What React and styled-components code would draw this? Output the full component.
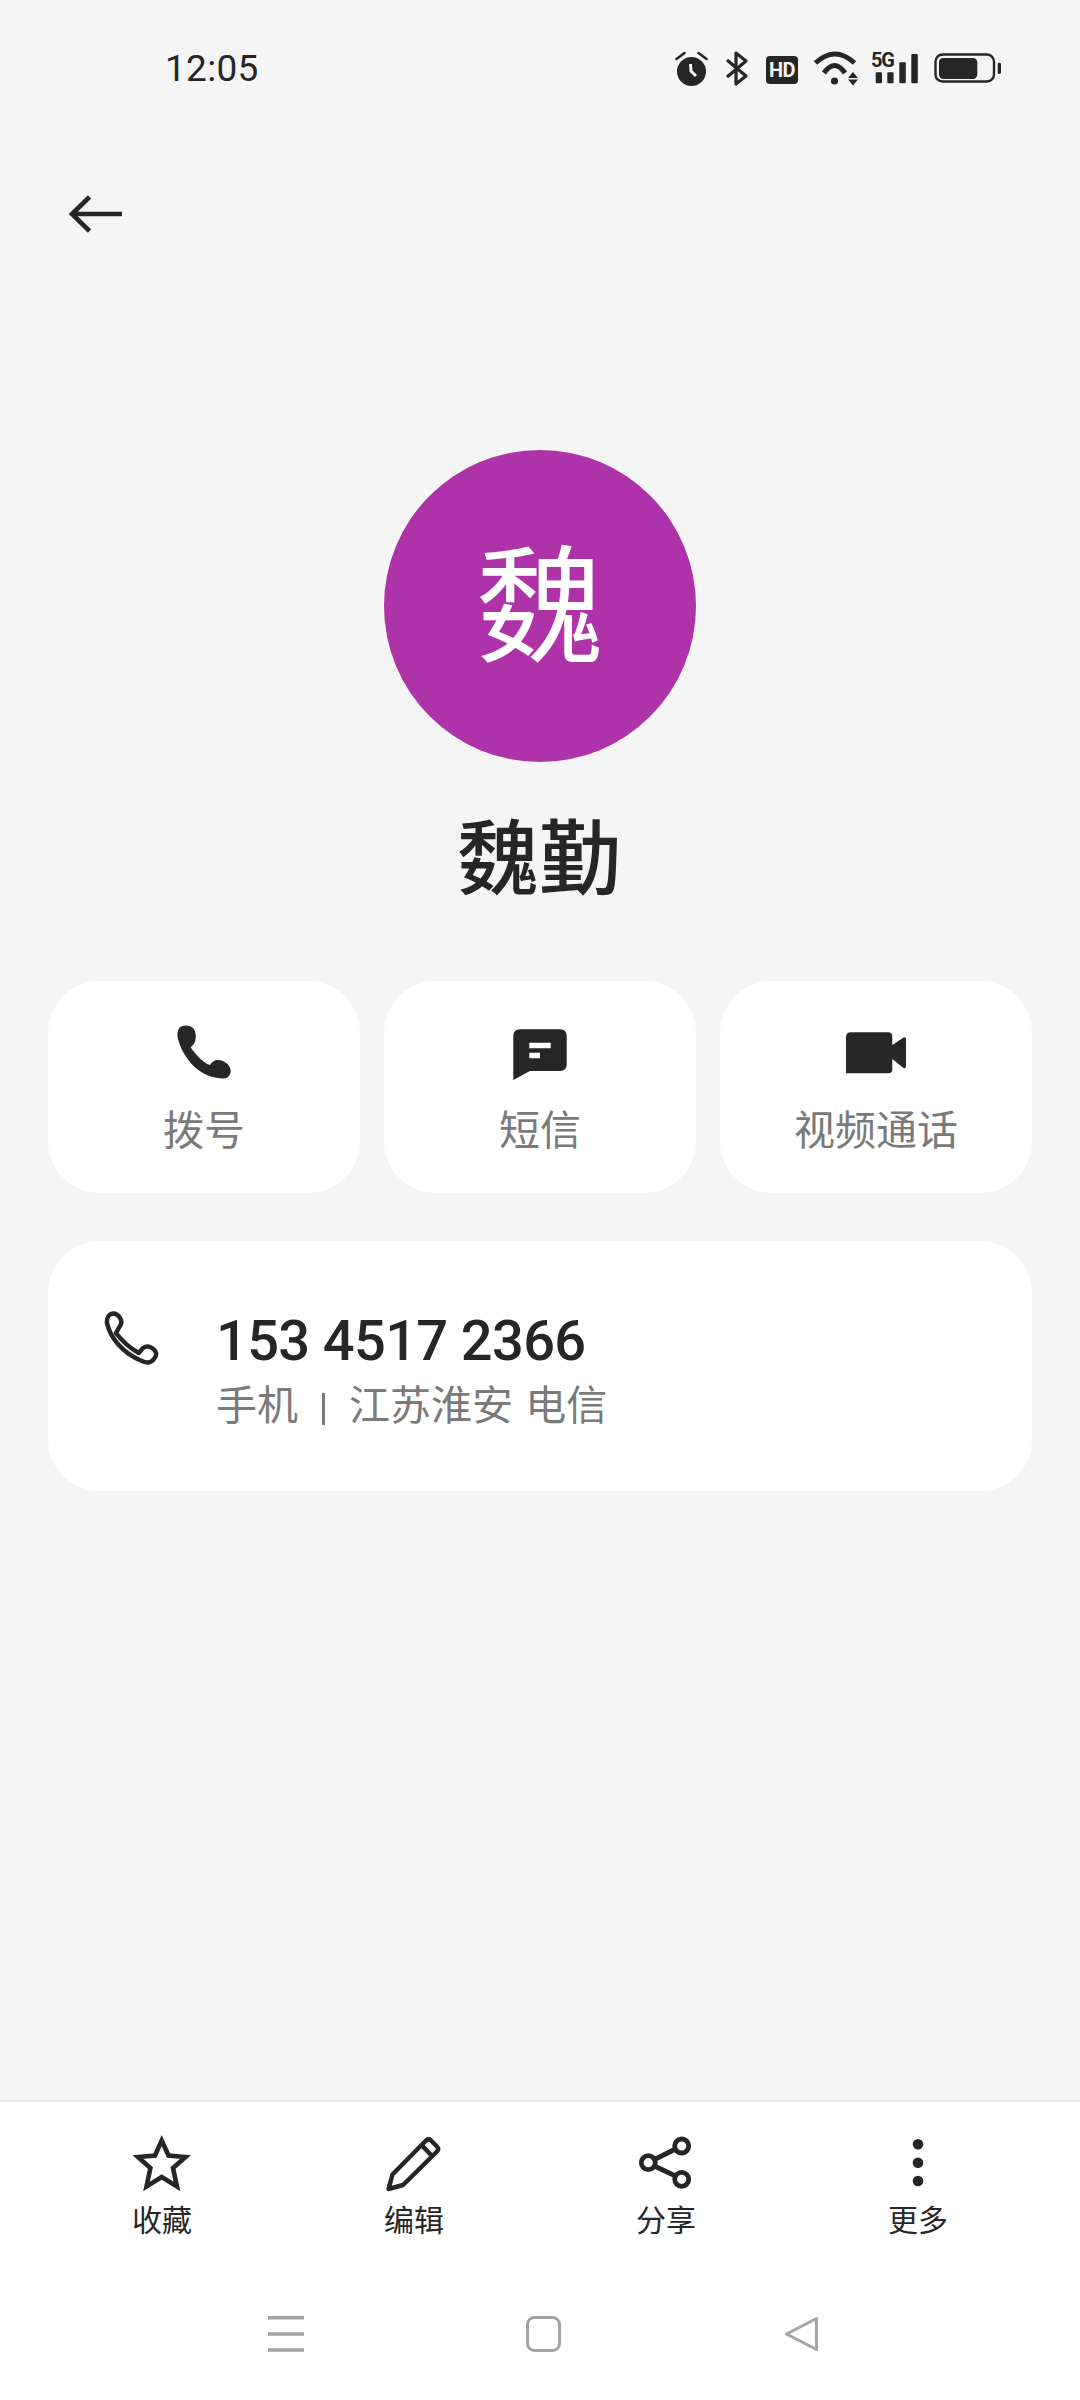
import React from "react";
import styled, { createGlobalStyle } from "styled-components";

const CJK = `Roboto, "Noto Sans CJK SC", sans-serif`;
const INK = "#262626";
const MUTED = "#7a7a7a";
const NAV = "#a3a3a3";

const Global = createGlobalStyle`
  html, body { margin: 0; padding: 0; background: #f5f5f5; }
  * { box-sizing: border-box; }
`;

const Page = styled.div`
  width: 1080px;
  height: 2400px;
  display: flex;
  flex-direction: column;
  background: #f5f5f5;
  font-family: ${CJK};
  color: ${INK};
  overflow: hidden;
`;

const StatusBar = styled.div`
  height: 136px;
  padding: 0 70px 0 165px;
  display: flex;
  align-items: center;
  justify-content: space-between;
`;

const Time = styled.div`
  font-size: 37px;
  line-height: 40px;
  letter-spacing: 0.3px;
  padding-top: 2px;
`;

const StatusIcons = styled.svg`
  display: block;
  width: 340px;
  height: 44px;
`;

const BackRow = styled.div`
  height: 156px;
  padding-left: 66px;
  display: flex;
  align-items: center;
`;

const BackIcon = styled.svg`
  display: block;
  width: 58px;
  height: 44px;
`;

const Hero = styled.div`
  padding-top: 158px;
  display: flex;
  flex-direction: column;
  align-items: center;
`;

const Avatar = styled.div`
  width: 312px;
  height: 312px;
  padding-top: 6px;
  border-radius: 50%;
  background: #ae33a8;
  color: #fff;
  display: flex;
  align-items: center;
  justify-content: center;
  font-size: 128px;
  font-weight: 400;
  line-height: 1;
`;

const Name = styled.div`
  margin-top: 44px;
  margin-right: 2px;
  font-size: 82px;
  line-height: 108px;
  font-weight: 500;
`;

const Actions = styled.div`
  margin: 67px 48px 0;
  display: grid;
  grid-template-columns: repeat(3, 1fr);
  gap: 24px;
`;

const ActionCard = styled.div`
  height: 212px;
  background: #fff;
  border-radius: 52px;
  display: flex;
  flex-direction: column;
  align-items: center;
  padding-top: 40px;
`;

const ActionIcon = styled.svg`
  display: block;
  width: 72px;
  height: 72px;
`;

const ActionLabel = styled.div`
  margin-top: 10px;
  font-size: 41px;
  line-height: 56px;
  color: ${MUTED};
`;

const NumberCard = styled.div`
  margin: 48px 48px 0;
  height: 250px;
  background: #fff;
  border-radius: 52px;
  display: flex;
  padding: 62px 0 0 52px;
`;

const NumberIcon = styled.svg`
  display: block;
  width: 60px;
  height: 60px;
  margin-top: 4px;
  flex: none;
`;

const NumberText = styled.div`
  margin-left: 56px;
  display: flex;
  flex-direction: column;
`;

const PhoneNumber = styled.div`
  font-size: 56px;
  line-height: 76px;
  font-weight: 500;
  letter-spacing: -0.65px;
`;

const NumberMeta = styled.div`
  font-size: 41px;
  line-height: 54px;
  word-spacing: 2px;
  color: ${MUTED};
`;

const MetaDivider = styled.span`
  display: inline-block;
  width: 3px;
  height: 32px;
  margin: 0 24px;
  vertical-align: -5px;
  background: ${MUTED};
`;

const Spacer = styled.div`
  flex: 1;
`;

const BottomArea = styled.div`
  height: 300px;
  background: #fff;
  border-top: 2px solid #e6e6e6;
  display: flex;
  flex-direction: column;
`;

const Toolbar = styled.div`
  padding: 0 36px;
  display: grid;
  grid-template-columns: repeat(4, 252px);
`;

const Tool = styled.div`
  display: flex;
  flex-direction: column;
  align-items: center;
  padding-top: 30px;
`;

const ToolIcon = styled.svg`
  display: block;
  width: 64px;
  height: 64px;
`;

const ToolLabel = styled.div`
  margin-top: 5px;
  font-size: 30px;
  line-height: 40px;
  color: ${INK};
`;

const NavBar = styled.div`
  margin-top: 71px;
  padding-left: 264px;
  display: flex;
  align-items: center;
`;

const NavIcon = styled.svg`
  display: block;
  width: 44px;
  height: 44px;
  margin-right: ${(p) => p.$gap || 0}px;
`;

const tools = [
  {
    label: "收藏",
    icon: (
      <path
        d="M31.7 8.5 L38.5 23.5 L55.5 25 L43 36 L47 54.5 L31.7 45 L16.5 54.5 L20.4 36 L8 25 L25 23.5 Z"
        fill="none"
        stroke={INK}
        strokeWidth="4.6"
      />
    ),
  },
  {
    label: "编辑",
    icon: (
      <g fill="none" stroke={INK} strokeWidth="4.5" strokeLinejoin="round">
        <path d="M6.5 57 L10.5 42.5 L44 8.5 Q46.5 6 49 8.5 L55 14.5 Q57.5 17 55 19.5 L21 53 Z" />
        <path d="M39.5 13 L50.5 24.5" />
      </g>
    ),
  },
  {
    label: "分享",
    icon: (
      <g fill="none" stroke={INK} strokeWidth="4.8">
        <circle cx="14.3" cy="30.7" r="7" />
        <circle cx="47.7" cy="14" r="7" />
        <circle cx="47.7" cy="47.3" r="7" />
        <path d="M20.5 27.5 L41.5 17 M20.5 34 L41.5 44" />
      </g>
    ),
  },
  {
    label: "更多",
    icon: (
      <g fill={INK}>
        <circle cx="32" cy="12.3" r="5.3" />
        <circle cx="32" cy="30.7" r="5.3" />
        <circle cx="32" cy="49" r="5.3" />
      </g>
    ),
  },
];

const actions = [
  {
    label: "拨号",
    icon: (
      <path
        d="M12.7 5.7 C17 3.7 22 4 25 7 C28 10 28.5 16 27 20.7 C26 23 24 25 22.7 26.3 C25 30 30 36 33.7 39 C36 41 39 43.5 42 44 C44 41 46 39.5 48.7 39 C53 38.5 57 40.7 60 43.5 C63 47 64 52 60.3 55.7 C57 58 54 57.8 52 57.3 C45 56.5 40 55 35.3 52.3 C28 47.5 24 44 20.3 39 C15 32 12 25 10.3 19 C9.3 15 8.5 9 12.7 5.7 Z"
        fill={INK}
      />
    ),
  },
  {
    label: "短信",
    icon: (
      <path
        fillRule="evenodd"
        d="M16 8.3 H56 Q62.7 8.3 62.7 15 V43.5 Q62.7 50 56 50 H26 L9.3 59 V15 Q9.3 8.3 16 8.3 Z M25.3 21.7 V27.3 H46.7 V21.7 Z M25.3 31.7 V37.3 H36 V31.7 Z"
        fill={INK}
      />
    ),
  },
  {
    label: "视频通话",
    icon: (
      <path
        d="M11 11.3 H48 Q52.3 11.3 52.3 15.5 V48.5 Q52.3 52.3 48.5 52.3 H6 V16 Q6 11.3 11 11.3 Z M52.3 24 L63.5 16.5 Q66 15.5 66 18.5 V45 Q66 48 63.5 47 L52.3 38 Z"
        fill={INK}
      />
    ),
  },
];

export default function App() {
  return (
    <Page>
      <Global />
      <StatusBar>
        <Time>12:05</Time>
        <StatusIcons viewBox="0 0 340 44" aria-hidden="true">
          <g fill={INK}>
            {/* alarm */}
            <circle cx="21.5" cy="25.5" r="14.5" />
            <path d="M6.5 13 L14.5 7 M36.5 13 L28.5 7" fill="none" stroke={INK} strokeWidth="2.6" strokeLinecap="round" />
            <path d="M20.5 18 L21 25 L26 30" fill="none" stroke="#f5f5f5" strokeWidth="3" />
            {/* bluetooth */}
            <path
              d="M57 14 L76 30 L66 38 V7 L76 15 L57 31"
              fill="none"
              stroke={INK}
              strokeWidth="3.2"
              strokeLinejoin="round"
            />
            {/* HD */}
            <rect x="96" y="10" width="32" height="28" rx="4" />
            <text x="112" y="31" textAnchor="middle" fontFamily="Roboto, sans-serif" fontWeight="700" fontSize="20" fill="#f5f5f5" letterSpacing="-0.5">HD</text>
            {/* wifi */}
            <path d="M145.5 17 Q165 -1 184.5 17" fill="none" stroke={INK} strokeWidth="5" />
            <path d="M154 27 Q164.5 12 175 27" fill="none" stroke={INK} strokeWidth="5" />
            <circle cx="164.5" cy="35" r="3.6" />
            <path d="M178 32 L183 26 L188 32 Z M178 33.5 L188 33.5 L183 39.5 Z" />
            {/* 5G + bars */}
            <text x="201" y="21" fontFamily="Roboto, sans-serif" fontWeight="700" fontSize="20" letterSpacing="-1.2">5G</text>
            <rect x="205.7" y="26.3" width="6.3" height="11" rx="1" />
            <rect x="217.3" y="26.3" width="6.3" height="11" rx="1" />
            <rect x="229.3" y="16.3" width="6.5" height="21" rx="1" />
            <rect x="241.3" y="8" width="6.5" height="29.3" rx="1" />
            {/* battery */}
            <rect x="265.5" y="8.5" width="58.5" height="27" rx="7" fill="none" stroke={INK} strokeWidth="2.4" />
            <rect x="269" y="12" width="38.3" height="21" rx="4.5" />
            <rect x="327.7" y="16.7" width="3.3" height="11.3" rx="1.4" />
          </g>
        </StatusIcons>
      </StatusBar>

      <BackRow>
        <BackIcon viewBox="0 0 58 44" aria-hidden="true">
          <path
            d="M56 22 H7 M23.5 5 L6 22 L23.5 39"
            fill="none"
            stroke={INK}
            strokeWidth="4.6"
          />
        </BackIcon>
      </BackRow>

      <Hero>
        <Avatar>魏</Avatar>
        <Name>魏勤</Name>
      </Hero>

      <Actions>
        {actions.map((a) => (
          <ActionCard key={a.label}>
            <ActionIcon viewBox="0 0 72 72">{a.icon}</ActionIcon>
            <ActionLabel>{a.label}</ActionLabel>
          </ActionCard>
        ))}
      </Actions>

      <NumberCard>
        <NumberIcon viewBox="0 0 60 60">
          <path
            d="M13 6.5 C9 7 6.5 11 7 16 C10 30 22 46 42 54 C47 56.5 51 56 54 52 C57.5 48 56.5 44 52 41 C49 39 46 39 43 41 L38.7 46 C30 41 22 34 16 26 L21 17 C22.5 13 18 6 13 6.5 Z"
            fill="none"
            stroke={INK}
            strokeWidth="4.5"
            strokeLinejoin="round"
          />
        </NumberIcon>
        <NumberText>
          <PhoneNumber>153 4517 2366</PhoneNumber>
          <NumberMeta>
            手机
            <MetaDivider />
            江苏淮安 电信
          </NumberMeta>
        </NumberText>
      </NumberCard>

      <Spacer />

      <BottomArea>
        <Toolbar>
          {tools.map((t) => (
            <Tool key={t.label}>
              <ToolIcon viewBox="0 0 64 64">{t.icon}</ToolIcon>
              <ToolLabel>{t.label}</ToolLabel>
            </Tool>
          ))}
        </Toolbar>
        <NavBar>
          <NavIcon viewBox="0 0 44 44" $gap={214}>
            <path d="M4 5.7 H40 M4 22 H40 M4 38 H40" stroke={NAV} strokeWidth="3.4" />
          </NavIcon>
          <NavIcon viewBox="0 0 44 44" $gap={214}>
            <rect x="5.5" y="5.5" width="32" height="33" rx="7" fill="none" stroke={NAV} strokeWidth="3" />
          </NavIcon>
          <NavIcon viewBox="0 0 44 44">
            <path
              d="M36.5 6.5 V37.5 L6.5 22 Z"
              fill="none"
              stroke={NAV}
              strokeWidth="3"
              strokeLinejoin="round"
            />
          </NavIcon>
        </NavBar>
      </BottomArea>
    </Page>
  );
}
